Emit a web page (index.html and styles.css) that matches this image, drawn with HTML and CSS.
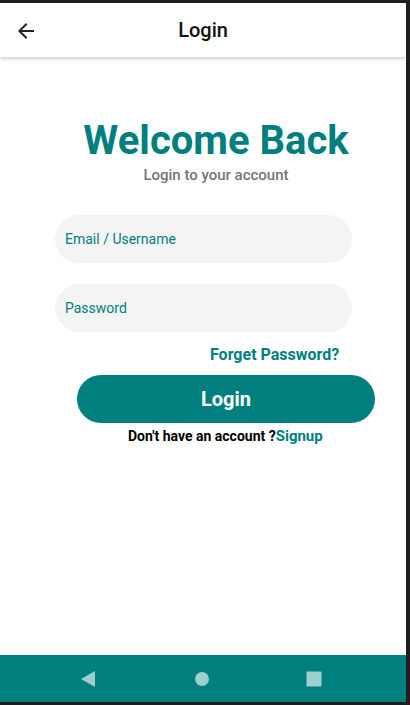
FILE: index.html
```html
<!DOCTYPE html>
<html>
<head>
<meta charset="utf-8">
<link rel="stylesheet" href="styles.css">
</head>
<body>
<div class="screen">
  <header class="appbar">
    <svg class="back" width="24" height="24" viewBox="0 0 24 24"><path d="M20 11H7.83l5.59-5.59L12 4l-8 8 8 8 1.41-1.41L7.83 13H20v-2z" fill="#222"/></svg>
    <div class="title">Login</div>
  </header>
  <main class="content">
    <h1 class="welcome">Welcome Back</h1>
    <p class="sub">Login to your account</p>
    <div class="field">Email / Username</div>
    <div class="field second">Password</div>
    <div class="forgot">Forget Password?</div>
    <button class="login">Login</button>
    <div class="signup"><span class="q">Don't have an account ?</span><span class="link">Signup</span></div>
  </main>
  <nav class="navbar">
    <svg class="nav-back" width="16" height="16" viewBox="0 0 16 16"><path d="M15 0V16L1 8Z" fill="#9ccfcf"/></svg>
    <svg class="nav-home" width="16" height="16" viewBox="0 0 16 16"><circle cx="8" cy="8" r="7" fill="#9ccfcf"/></svg>
    <svg class="nav-recent" width="16" height="16" viewBox="0 0 16 16"><rect x="0.5" y="0.5" width="15" height="15" rx="1" fill="#9ccfcf"/></svg>
  </nav>
</div>
</body>
</html>
```
FILE: styles.css
```css
html, body {
  margin: 0;
  padding: 0;
  background: #1e1e1e;
  height: 705px;
  overflow: hidden;
}
.screen {
  margin: 3px 4px 3px 0;
  height: 699px;
  background: #fff;
  display: flex;
  flex-direction: column;
  font-family: Roboto, "Liberation Sans", sans-serif;
}
.appbar {
  height: 54px;
  display: flex;
  align-items: center;
  position: relative;
  box-shadow: 0 2px 3px rgba(0,0,0,0.18);
  z-index: 1;
}
.back {
  margin-left: 14px;
  margin-top: 1px;
}
.title {
  position: absolute;
  left: 0;
  right: 0;
  text-align: center;
  font-size: 20px;
  font-weight: 500;
  color: #111;
  pointer-events: none;
}
.content {
  flex: 1;
  display: flex;
  flex-direction: column;
}
.welcome {
  margin: 61px 0 0 0;
  padding-left: 26px;
  text-align: center;
  font-size: 40px;
  font-weight: 700;
  color: #007f7e;
  line-height: 46px;
}
.sub {
  margin: 2px 0 0 0;
  padding-left: 26px;
  text-align: center;
  font-size: 15px;
  font-weight: 500;
  color: #757575;
  line-height: 18px;
}
.field {
  margin: 31px 0 0 55px;
  width: 297px;
  height: 48px;
  border-radius: 24px;
  background: #f4f4f4;
  box-sizing: border-box;
  padding-left: 10px;
  display: flex;
  align-items: center;
  font-size: 14px;
  color: #007f7e;
}
.field.second {
  margin-top: 21px;
}
.forgot {
  margin: 13px 0 0 0;
  padding-left: 210px;
  font-size: 16px;
  font-weight: 700;
  color: #007f7e;
  line-height: 19px;
}
.login {
  margin: 11px 0 0 77px;
  width: 298px;
  height: 48px;
  border: none;
  border-radius: 24px;
  background: #007f7e;
  color: #fff;
  font-family: inherit;
  font-size: 20px;
  font-weight: 700;
}
.signup {
  margin-top: 4px;
  padding-left: 128px;
  display: flex;
  align-items: baseline;
}
.q {
  font-size: 14px;
  font-weight: 700;
  color: #000;
}
.link {
  font-size: 15px;
  font-weight: 700;
  color: #007f7e;
}
.navbar {
  height: 47px;
  background: #007f7e;
  display: flex;
  align-items: center;
  padding-left: 80px;
}
.nav-home {
  margin-left: 98px;
}
.nav-recent {
  margin-left: 96px;
}
```
